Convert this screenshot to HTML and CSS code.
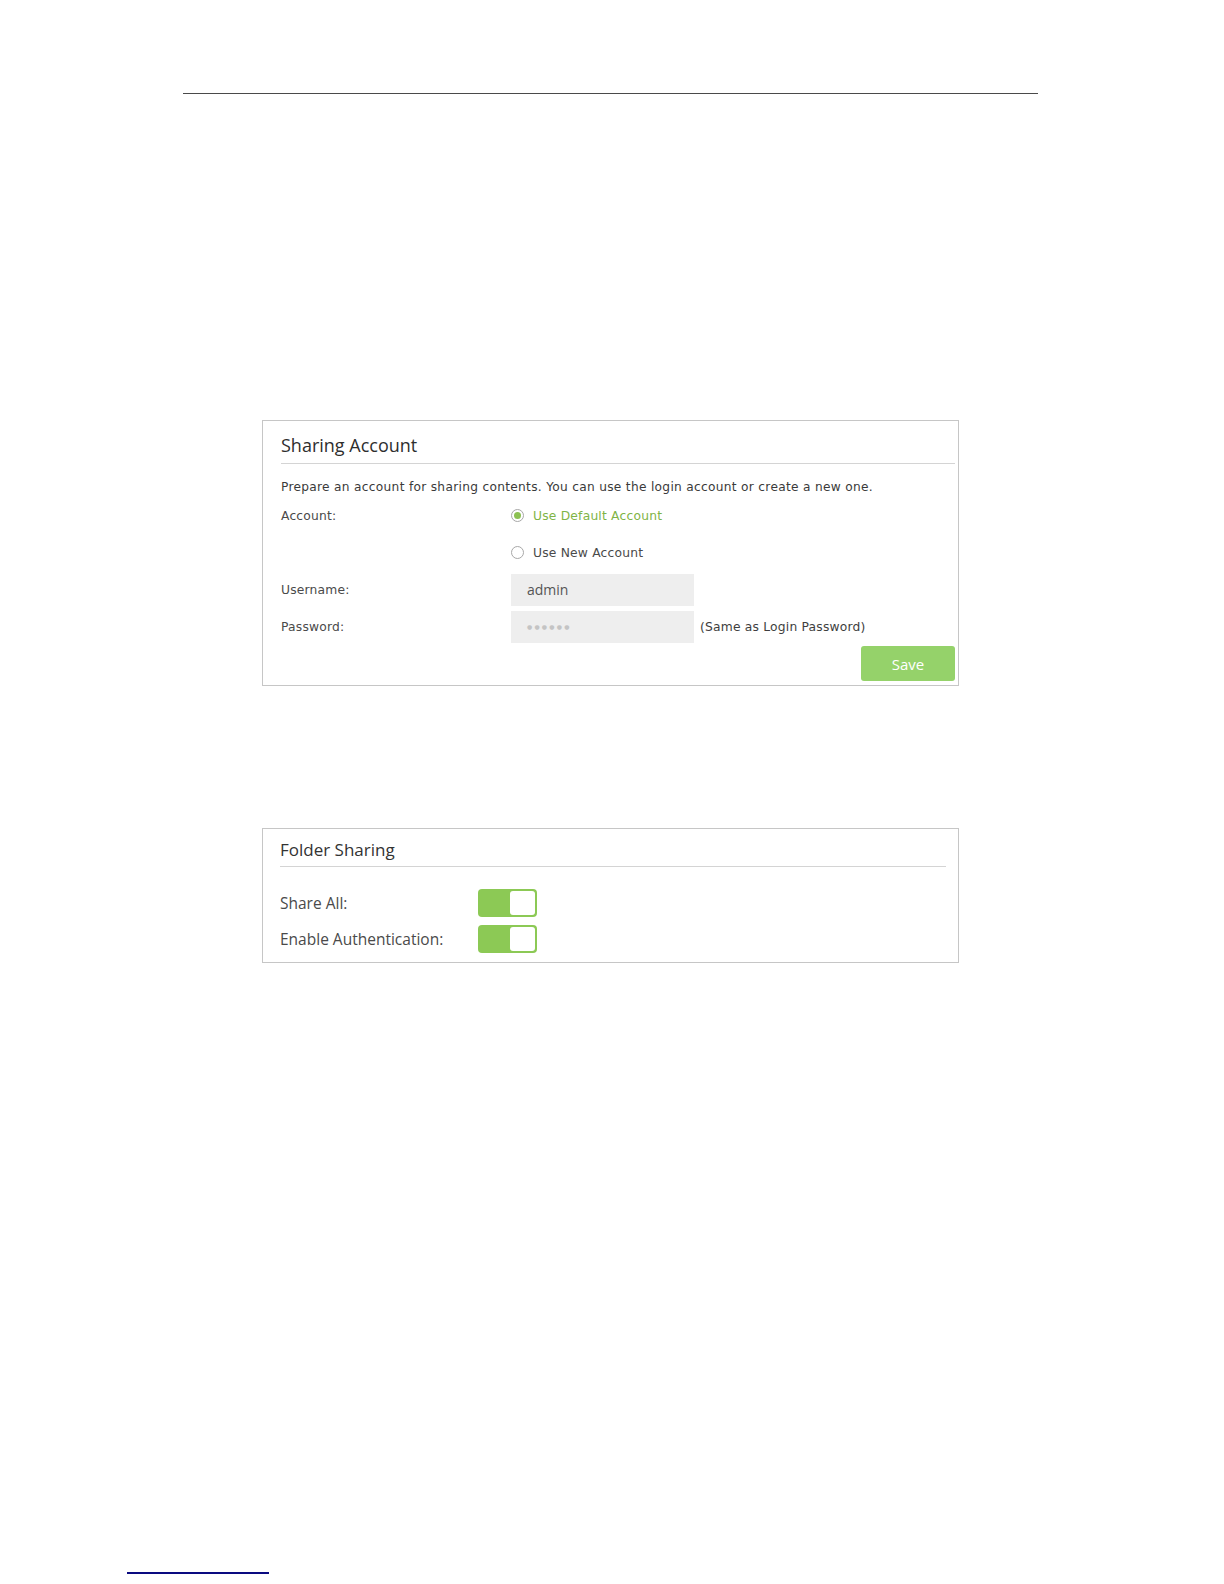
FILE: index.html
```html
<!DOCTYPE html>
<html>
<head>
<meta charset="utf-8">
<link rel="stylesheet" href="styles.css">
</head>
<body>
<div class="page">
  <div class="top-rule"></div>

  <section class="panel panel-account">
    <h2 class="panel-title">Sharing Account</h2>
    <p class="desc">Prepare an account for sharing contents. You can use the login account or create a new one.</p>
    <div class="row">
      <span class="label">Account:</span>
      <span class="radio checked"><span class="dot"></span></span>
      <span class="opt opt-on">Use Default Account</span>
    </div>
    <div class="row">
      <span class="label"></span>
      <span class="radio"></span>
      <span class="opt">Use New Account</span>
    </div>
    <div class="row">
      <span class="label">Username:</span>
      <span class="field">admin</span>
    </div>
    <div class="row">
      <span class="label">Password:</span>
      <span class="field pw">&#9679;&#9679;&#9679;&#9679;&#9679;&#9679;</span>
      <span class="hint">(Same as Login Password)</span>
    </div>
    <div class="actions">
      <button class="save">Save</button>
    </div>
  </section>

  <section class="panel panel-folder">
    <h2 class="panel-title title-folder">Folder Sharing</h2>
    <div class="trow">
      <span class="tlabel">Share All:</span>
      <span class="toggle"><span class="knob"></span></span>
    </div>
    <div class="trow">
      <span class="tlabel">Enable Authentication:</span>
      <span class="toggle"><span class="knob"></span></span>
    </div>
  </section>

  <div class="foot-rule"></div>
</div>
</body>
</html>
```

FILE: styles.css
```css
html, body {
  margin: 0;
  padding: 0;
  background: #fff;
}
body {
  width: 1224px;
  height: 1584px;
  overflow: hidden;
  font-family: "DejaVu Sans", Verdana, sans-serif;
}
.page {
  padding-top: 93px;
  position: relative;
  height: 1584px;
  box-sizing: border-box;
}
.top-rule {
  margin-left: 183px;
  width: 855px;
  height: 1px;
  background: #4a4a4a;
}
.panel {
  margin-left: 262px;
  width: 697px;
  box-sizing: border-box;
  border: 1px solid #c6c6c6;
}
.panel-account {
  margin-top: 326px;
  height: 266px;
}
.panel-title {
  margin: 0 3px 0 18px;
  padding: 12px 0 6px;
  font-family: "Open Sans", sans-serif;
  font-weight: 400;
  font-size: 18px;
  line-height: 24px;
  color: #2e2e2e;
  border-bottom: 1px solid #d4d4d4;
}
.desc {
  margin: 13px 0 0 18px;
  height: 20px;
  font-size: 12.2px;
  line-height: 20px;
  letter-spacing: 0.3px;
  color: #3a3a3a;
}
.row {
  display: flex;
  align-items: center;
  height: 37px;
  margin-left: 18px;
  font-size: 12.3px;
  letter-spacing: 0.2px;
  color: #4a4a4a;
}
.label {
  width: 230px;
  flex: none;
}
.radio {
  width: 11px;
  height: 11px;
  border: 1px solid #a8a8a8;
  border-radius: 50%;
  display: flex;
  align-items: center;
  justify-content: center;
  flex: none;
  background: #fff;
}
.radio .dot {
  width: 7px;
  height: 7px;
  border-radius: 50%;
  background: #8cc152;
}
.opt {
  margin-left: 9px;
}
.opt-on {
  color: #7fb446;
}
.field {
  width: 183px;
  height: 32px;
  box-sizing: border-box;
  background: #eeeeee;
  padding-left: 16px;
  display: flex;
  align-items: center;
  font-family: "Open Sans", sans-serif;
  font-size: 14px;
  letter-spacing: 0;
  color: #555;
  flex: none;
}
.field.pw {
  font-family: "DejaVu Sans", sans-serif;
  font-size: 6px;
  letter-spacing: 2.2px;
  color: #c4c4c4;
}
.hint {
  margin-left: 6px;
  color: #3e3e3e;
}
.actions {
  display: flex;
  justify-content: flex-end;
  margin-right: 3px;
  padding-top: 1px;
}
.save {
  width: 94px;
  height: 35px;
  border: none;
  border-radius: 3px;
  background: #95d26a;
  color: #fff;
  font-family: "Open Sans", sans-serif;
  font-size: 15px;
  padding: 0;
  margin: 0;
}
.panel-folder {
  margin-top: 142px;
  height: 135px;
}
.title-folder {
  margin: 0 12px 0 17px;
  padding: 9px 0 4px;
  font-size: 17px;
  color: #333;
}
.trow {
  display: flex;
  align-items: center;
  height: 36px;
  margin-left: 17px;
}
.panel-folder .trow:first-of-type {
  margin-top: 18px;
}
.tlabel {
  width: 198px;
  flex: none;
  font-family: "Open Sans", sans-serif;
  font-size: 15.5px;
  color: #4a4a4a;
}
.toggle {
  width: 59px;
  height: 28px;
  box-sizing: border-box;
  background: #8cc955;
  border-radius: 4px;
  display: flex;
  justify-content: flex-end;
  padding: 2px;
}
.knob {
  width: 25px;
  height: 24px;
  background: #fff;
  border-radius: 3px;
}
.foot-rule {
  position: absolute;
  left: 127px;
  top: 1572px;
  width: 142px;
  height: 2px;
  background: #0a0a80;
}
```
